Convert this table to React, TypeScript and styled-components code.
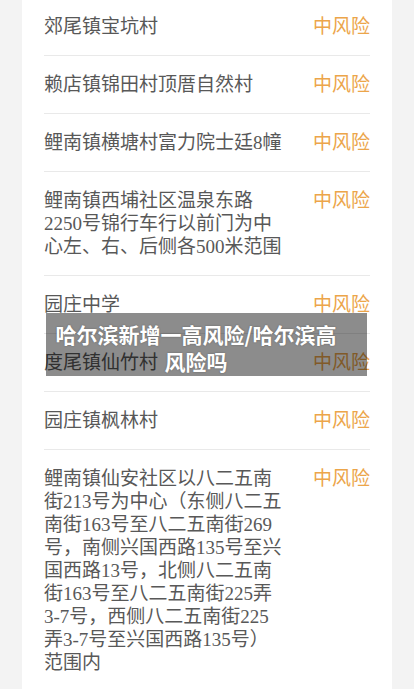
import React from "react";
import styled, { createGlobalStyle } from "styled-components";

const areas = [
  "郊尾镇宝坑村",
  "赖店镇锦田村顶厝自然村",
  "鲤南镇横塘村富力院士廷8幢",
  "鲤南镇西埔社区温泉东路2250号锦行车行以前门为中心左、右、后侧各500米范围",
  "园庄中学",
  "度尾镇仙竹村",
  "园庄镇枫林村",
  "鲤南镇仙安社区以八二五南街213号为中心（东侧八二五南街163号至八二五南街269号，南侧兴国西路135号至兴国西路13号，北侧八二五南街163号至八二五南街225弄3-7号，西侧八二五南街225弄3-7号至兴国西路135号）范围内",
];

const App: React.FC = () => (
  <Page>
    <GlobalStyle />
    <Card>
      {areas.map((name) => (
        <Row key={name}>
          <AreaName>{name}</AreaName>
          <RiskLevel>中风险</RiskLevel>
        </Row>
      ))}
    </Card>
    <Caption>哈尔滨新增一高风险/哈尔滨高风险吗</Caption>
  </Page>
);

export default App;

const GlobalStyle = createGlobalStyle`
  body {
    margin: 0;
    background: #f3f3f3;
    font-family: "Liberation Serif", "Noto Sans CJK SC", serif;
  }
`;

const Page = styled.div`
  position: relative;
  min-height: 689px;
  overflow: hidden;
`;

const Card = styled.div`
  margin: 0 22px;
  padding: 0 22px;
  background: #ffffff;
`;

const Row = styled.div`
  display: flex;
  flex-direction: row;
  justify-content: space-between;
  align-items: flex-start;
  padding: 17px 0;
  border-bottom: 1px solid #e9e9e9;

  &:first-child {
    padding-top: 15px;
  }
`;

const AreaName = styled.div`
  width: 241px;
  font-size: 19px;
  line-height: 23px;
  color: #585858;
`;

const RiskLevel = styled.div`
  font-size: 19px;
  line-height: 23px;
  color: #eca54a;
  white-space: nowrap;
`;

// caption sits over the list, like a banner on the picture
const Caption = styled.div`
  position: absolute;
  top: 313px;
  left: 46px;
  width: 321px;
  box-sizing: border-box;
  padding: 8px 30px 1px 9px;
  background: rgba(0, 0, 0, 0.45);
  color: #ffffff;
  font-family: "Noto Sans CJK SC", sans-serif;
  font-weight: 700;
  font-size: 21px;
  line-height: 27px;
  text-align: center;
  text-shadow: 0 0 2px rgba(0, 0, 0, 0.3);
`;
